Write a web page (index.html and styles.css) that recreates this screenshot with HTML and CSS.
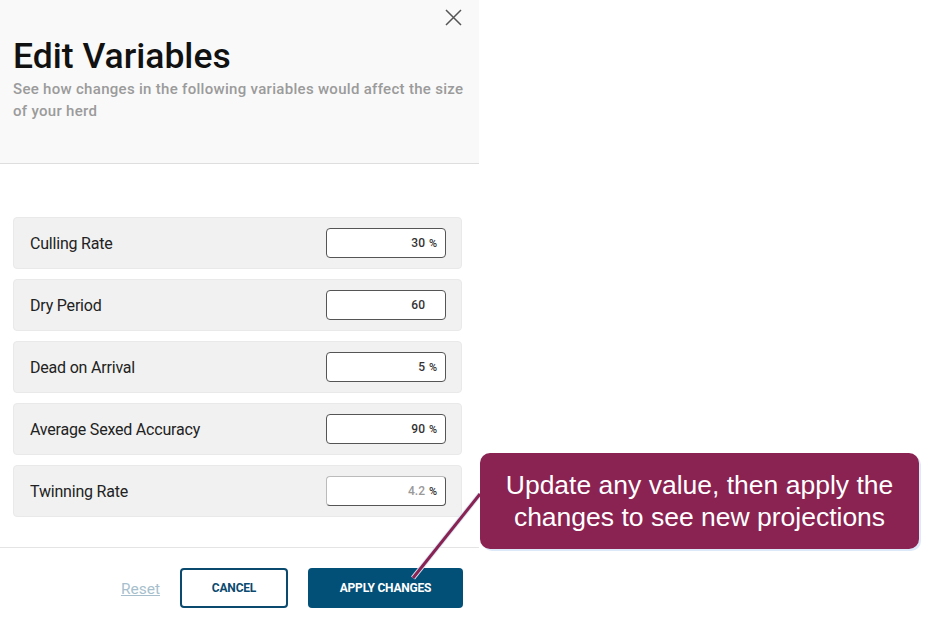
FILE: index.html
```html
<!DOCTYPE html>
<html lang="en">
<head>
  <meta charset="UTF-8" />
  <meta name="viewport" content="width=device-width, initial-scale=1.0"/>
  <title>Edit Variables</title>
  <link rel="stylesheet" href="styles.css">
</head>
<body>

<div class="panel">
  <div class="panel-header">
    <div class="close-row">
      <button class="close-btn" aria-label="Close">
        <svg width="17" height="17" viewBox="0 0 17 17"><path d="M1 1L16 16M16 1L1 16" stroke="#555" stroke-width="1.5" fill="none"/></svg>
      </button>
    </div>
    <h1>Edit Variables</h1>
    <p class="subtitle">See how changes in the following variables would affect the size of your herd</p>
  </div>

  <div class="variables">
    <div class="var-row">
      <span class="var-name">Culling Rate</span>
      <div class="var-input"><span class="num">30</span><span class="unit">%</span></div>
    </div>
    <div class="var-row">
      <span class="var-name">Dry Period</span>
      <div class="var-input"><span class="num">60</span><span class="unit"></span></div>
    </div>
    <div class="var-row">
      <span class="var-name">Dead on Arrival</span>
      <div class="var-input"><span class="num">5</span><span class="unit">%</span></div>
    </div>
    <div class="var-row">
      <span class="var-name">Average Sexed Accuracy</span>
      <div class="var-input"><span class="num">90</span><span class="unit">%</span></div>
    </div>
    <div class="var-row">
      <span class="var-name">Twinning Rate</span>
      <div class="var-input placeholder"><span class="num">4.2</span><span class="unit">%</span></div>
    </div>
  </div>

  <div class="panel-footer">
    <a href="#" class="reset">Reset</a>
    <button class="btn btn-outline">CANCEL</button>
    <button class="btn btn-primary">APPLY CHANGES</button>
  </div>
</div>

<svg class="pointer" width="937" height="636" viewBox="0 0 937 636">
  <line x1="480" y1="494" x2="413" y2="578" stroke="#dbe9f7" stroke-width="5"/>
  <line x1="480" y1="494" x2="413" y2="578" stroke="#8a2252" stroke-width="3"/>
</svg>

<div class="callout">Update any value, then apply the changes to see new projections</div>

</body>
</html>
```

FILE: styles.css
```css
body {
  margin: 0;
  background: #fff;
  font-family: Roboto, "Liberation Sans", sans-serif;
  color: #222;
  position: relative;
  height: 636px;
  overflow: hidden;
}

.panel {
  width: 479px;
  height: 636px;
  display: flex;
  flex-direction: column;
}

.panel-header {
  background: #f9f9f9;
  border-bottom: 1px solid #dedede;
  height: 164px;
  padding: 0 13px;
  box-sizing: border-box;
}

.close-row {
  display: flex;
  justify-content: flex-end;
  padding-top: 9px;
  margin-right: 4px;
}

.close-btn {
  background: none;
  border: 0;
  padding: 0;
  width: 17px;
  height: 17px;
  cursor: pointer;
}

h1 {
  margin: 10px 0 0;
  font-size: 35.5px;
  font-weight: 500;
  color: #111;
  line-height: 40px;
}

.subtitle {
  margin: 2px 0 0;
  font-size: 15px;
  font-weight: 500;
  color: #9b9b9b;
  line-height: 22px;
  letter-spacing: 0.3px;
  max-width: 455px;
}

.variables {
  padding: 53px 17px 0 13px;
  display: flex;
  flex-direction: column;
  gap: 10px;
  height: 384px;
  box-sizing: border-box;
  border-bottom: 1px solid #e4e4e4;
}

.var-row {
  height: 52px;
  box-sizing: border-box;
  background: #f1f1f1;
  border: 1px solid #e9e9e9;
  border-radius: 4px;
  display: flex;
  align-items: center;
  justify-content: space-between;
  padding: 0 15px 0 16px;
}

.var-name {
  font-size: 16px;
  color: #222;
  letter-spacing: -0.2px;
}

.var-input {
  width: 120px;
  height: 30px;
  box-sizing: border-box;
  background: #fff;
  border: 1px solid #555;
  border-radius: 4px;
  display: flex;
  align-items: center;
  justify-content: flex-end;
  padding-right: 8px;
  font-size: 12px;
  font-weight: 500;
  color: #333;
}

.var-input .unit {
  width: 12px;
  text-align: right;
  font-size: 11px;
}

.var-input.placeholder {
  border-color: #bbb #555 #555 #bbb;
}

.var-input.placeholder .num {
  color: #999;
}

.panel-footer {
  flex: 1;
  display: flex;
  align-items: flex-start;
  padding: 20px 16px 0 0;
  justify-content: flex-end;
  gap: 20px;
}

.reset {
  color: #a7bfcd;
  font-size: 15.5px;
  margin-top: 12px;
  text-decoration: underline;
}

.btn {
  height: 40px;
  box-sizing: border-box;
  border-radius: 4px;
  font-family: Roboto, sans-serif;
  font-size: 12px;
  font-weight: 700;
  letter-spacing: -0.2px;
  cursor: pointer;
}

.btn-outline {
  width: 108px;
  background: #fff;
  color: #0b4a6f;
  border: 2px solid #0b4a6f;
}

.btn-primary {
  width: 155px;
  background: #024f78;
  color: #fff;
  border: 0;
}

.pointer {
  position: absolute;
  left: 0;
  top: 0;
  pointer-events: none;
}

.callout {
  position: absolute;
  left: 480px;
  top: 453px;
  width: 439px;
  height: 96px;
  box-sizing: border-box;
  background: #8a2252;
  border-radius: 10px;
  box-shadow: 2px 2px 0 #dce9f8;
  color: #fff;
  font-family: "Liberation Sans", Arial, sans-serif;
  font-size: 26.5px;
  line-height: 32px;
  text-align: center;
  display: flex;
  align-items: center;
  justify-content: center;
  padding: 0 16px;
}
```
